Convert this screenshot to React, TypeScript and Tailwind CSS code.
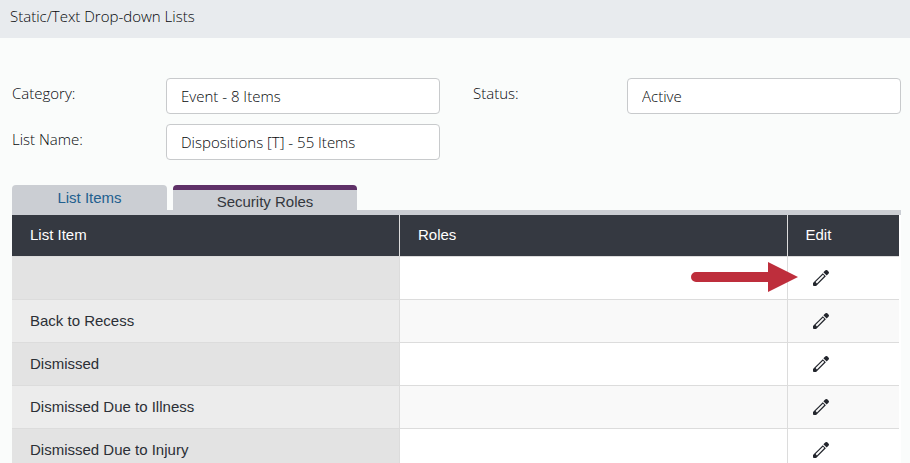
import { useState } from "react";
import clsx from "clsx";

const ROWS = [
  { id: 1, item: "", roles: "" },
  { id: 2, item: "Back to Recess", roles: "" },
  { id: 3, item: "Dismissed", roles: "" },
  { id: 4, item: "Dismissed Due to Illness", roles: "" },
  { id: 5, item: "Dismissed Due to Injury", roles: "" },
];

const TABS = [
  { name: "List Items", width: "w-[155px]" },
  { name: "Security Roles", width: "w-[184px]" },
];

function PencilIcon() {
  return (
    <svg width="16" height="16" viewBox="0 0 16 16" aria-hidden="true">
      <g transform="translate(0 16) rotate(-45)" fill="#23262d">
        {/* body with a hollow centre */}
        <path fillRule="evenodd" d="M0.300 0L1.500-2.200H16V2.200H1.500zM4.600-.9V.9H15V-.9z" />
        {/* eraser */}
        <path d="M17-2.300H19.500a1.700 1.700 0 0 1 1.700 1.700V.6A1.700 1.700 0 0 1 19.500 2.300H17z" />
      </g>
    </svg>
  );
}

function Arrow() {
  return (
    <svg
      className="pointer-events-none absolute top-1 right-full z-10 -mr-[10px]"
      width="107"
      height="32"
      viewBox="0 0 107 32"
      aria-hidden="true"
    >
      <path d="M5 11h72V1l30 15-30 15V21H5a5 5 0 0 1 0-10z" fill="#be2e3c" />
    </svg>
  );
}

function Field({ id, label, value }: { id: string; label: string; value: string }) {
  return (
    <div className="flex items-start">
      <label htmlFor={id} className="w-[154px] shrink-0 pt-[3px] leading-6">
        {label}
      </label>
      <input
        id={id}
        type="text"
        readOnly
        defaultValue={value}
        className="h-9 min-w-0 flex-1 rounded border border-[#c8cacc] bg-white px-[14px] outline-none"
      />
    </div>
  );
}

export default function App() {
  const [active, setActive] = useState("Security Roles");

  return (
    <div className="h-screen overflow-hidden bg-[#fafcfb] font-['Open_Sans',sans-serif] text-[15px] font-light text-[#05070a]">
      <header className="bg-[#e8ebee] px-[10px] pt-[6px] pb-3">
        <h1 className="leading-5 font-light">Static/Text Drop-down Lists</h1>
      </header>

      <main className="pt-10 pr-[9px] pl-3">
        <form className="grid grid-cols-2 gap-x-[33px] gap-y-[10px]">
          <Field id="category" label="Category:" value="Event - 8 Items" />
          <Field id="status" label="Status:" value="Active" />
          <Field id="list-name" label="List Name:" value="Dispositions [T] - 55 Items" />
        </form>

        {/* Tabs */}
        <div
          className="mt-[25px] flex gap-[6px] border-b-[5px] border-[#cbced3] font-['Liberation_Sans',sans-serif] font-normal"
          role="tablist"
        >
          {TABS.map((tab) => (
            <button
              key={tab.name}
              type="button"
              role="tab"
              aria-selected={tab.name === active}
              onClick={() => setActive(tab.name)}
              className={clsx(
                "h-[25px] overflow-hidden rounded-t bg-[#cbced3] leading-6",
                tab.width,
                tab.name === active ? "border-t-[5px] border-[#5f3168] text-[#33373d]" : "text-[#22608f]"
              )}
            >
              {tab.name}
            </button>
          ))}
        </div>

        {/* List */}
        <div className="bg-white pr-[2px] font-['Liberation_Sans',sans-serif] leading-5 font-normal text-[#2b2f36]">
          <table className="w-full table-fixed text-left">
            <thead>
              <tr className="h-[41px] bg-[#353941] text-white">
                <th className="border-r border-[#dcdcdc] px-[18px] font-normal">List Item</th>
                <th className="border-r border-[#dcdcdc] px-[18px] font-normal">Roles</th>
                <th className="w-28 px-[18px] font-normal">Edit</th>
              </tr>
            </thead>
            <tbody>
              {ROWS.map((row, i) => (
                <tr key={row.id} className="group h-[43px] border-t border-[#dcdcdc] even:bg-[#f9f9f9]">
                  <td className="border-r border-[#dcdcdc] bg-[#e3e3e3] px-[18px] group-even:bg-[#ececec]">{row.item}</td>
                  <td className="border-r border-[#dcdcdc] px-[18px]">{row.roles}</td>
                  <td className="relative px-[25px]">
                    {i === 0 && <Arrow />}
                    <button type="button" aria-label={`Edit ${row.item}`} className="block">
                      <PencilIcon />
                    </button>
                  </td>
                </tr>
              ))}
            </tbody>
          </table>
        </div>
      </main>
    </div>
  );
}
